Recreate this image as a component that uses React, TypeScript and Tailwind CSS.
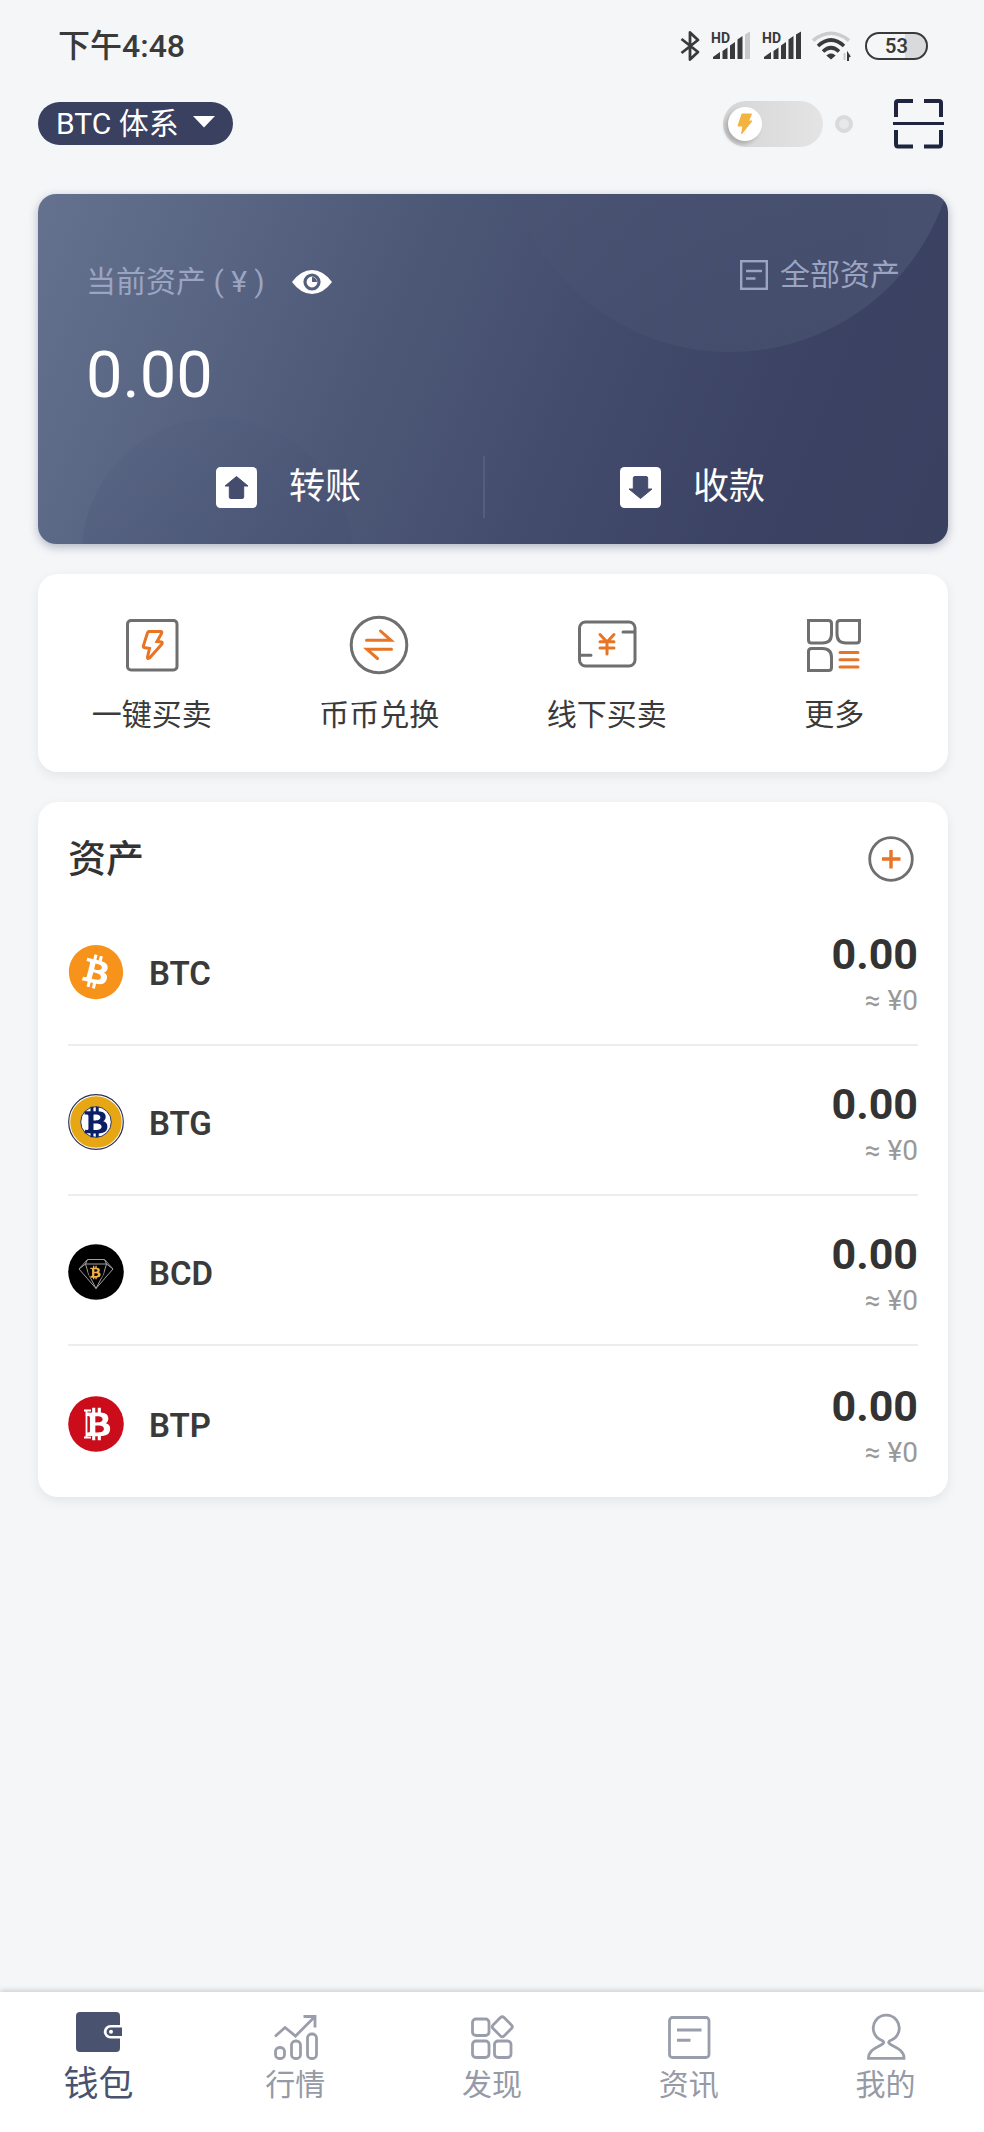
import { useState, type ReactNode } from 'react';
import { FaBitcoin, FaBtc } from 'react-icons/fa';

const ORANGE = '#e87426';
const GRAY = '#6f6f6f';

/* ---------- status bar ---------- */

function BluetoothIcon() {
  return (
    <svg viewBox="0 0 20 32" className="h-8 w-5" fill="none" stroke="#3a3a3a" strokeWidth="2.8" strokeLinejoin="round" aria-hidden="true">
      <path d="M1.5 9 L18 22 L10 29.5 V2.5 L18 10 L1.5 23" />
    </svg>
  );
}

function SignalIcon({ level }: { level: number }) {
  const bars = [
    'M3 28 V26 L10 21 V28Z',
    'M12.5 28 V20 L17.5 16.5 V28Z',
    'M20 28 V14.5 L25 11 V28Z',
    'M27.5 28 V8.5 L32.5 5 V28Z',
    'M35 28 V3.500 L40 0.500 V28Z',
  ];
  return (
    <svg viewBox="0 0 41 30" className="h-[30px] w-[41px]" aria-hidden="true">
      {bars.map((d, i) => (
        <path key={d} d={d} fill={i < level ? '#3a3a3a' : '#c9cacc'} />
      ))}
      <text x="1" y="12" fontSize="14" fontWeight="700" fill="#3a3a3a" fontFamily="Roboto, sans-serif">
        HD
      </text>
    </svg>
  );
}

function WifiIcon() {
  return (
    <svg viewBox="0 0 39 30" className="h-[30px] w-[39px]" fill="none" strokeWidth="3.6" aria-hidden="true">
      <path d="M1 9.5 Q19 -5 37 9.5" stroke="#cbccce" />
      <path d="M6 15 Q19 3 32 15" stroke="#3a3a3a" />
      <path d="M11 20.5 Q19 13 27 20.5" stroke="#3a3a3a" />
      <path d="M15.5 24.5 Q19 22 22.5 24.5 L19 27.5Z" fill="#3a3a3a" stroke="#3a3a3a" strokeWidth="1.5" />
      <path d="M32.5 22 V29" stroke="#cbccce" strokeWidth="2" />
      <path d="M36 30 V23 L38 26" stroke="#3a3a3a" strokeWidth="2" />
    </svg>
  );
}

function StatusBar() {
  return (
    <div className="flex h-[94px] items-center justify-between px-5 pb-0.5 text-[#3a3a3a]">
      <span className="text-[32px] font-medium">下午4:48</span>
      <div className="flex items-center gap-[10px]">
        <BluetoothIcon />
        <SignalIcon level={4} />
        <SignalIcon level={5} />
        <WifiIcon />
        <span className="ml-1 flex h-7 w-[63px] items-center justify-center rounded-full border-2 border-[#3a3a3a] bg-linear-to-r from-white/0 from-65% to-[#d9dadc] to-65% text-xl font-semibold">
          53
        </span>
      </div>
    </div>
  );
}

/* ---------- toolbar ---------- */

function LightningSwitch() {
  const [on, setOn] = useState(false);
  return (
    <label className="flex cursor-pointer items-center gap-3">
      <input
        type="checkbox"
        className="peer sr-only"
        checked={on}
        onChange={(e) => setOn(e.target.checked)}
        aria-label="闪电网络"
      />
      <span className="flex h-[46px] w-[100px] items-center rounded-full bg-linear-to-r from-[#d6d6d6] to-[#e4e4e4] px-[5px] peer-checked:justify-end">
        <span className="flex size-[34px] items-center justify-center rounded-full bg-white shadow-[-3px_3px_4px_rgba(0,0,0,0.2)]">
          <svg viewBox="0 0 16 22" className="h-[22px] w-4" fill="#f4b23f" aria-hidden="true">
            <path d="M5 1 H14.5 L11.5 8 H15 L4.5 21 L6 13 H1Z" stroke="#f4b23f" strokeLinejoin="round" />
          </svg>
        </span>
      </span>
      <span className="size-[18px] rounded-full border-4 border-[#dadada] bg-[#e8e8e8]" />
    </label>
  );
}

function Toolbar() {
  return (
    <div className="flex items-center justify-between">
      <div className="relative">
        <select
          aria-label="体系"
          className="h-[43px] cursor-pointer appearance-none rounded-full bg-[#394060] pr-[54px] pl-[18px] text-[30px] leading-[43px] text-white"
        >
          <option>BTC 体系</option>
        </select>
        <svg viewBox="0 0 22 12" className="pointer-events-none absolute top-[14px] right-[18px] h-3 w-[22px]" fill="white" aria-hidden="true">
          <path d="M0 0 H22 L11 11.5Z" />
        </svg>
      </div>
      <div className="flex items-center gap-9">
        <LightningSwitch />
        <button type="button" aria-label="扫一扫" className="cursor-pointer p-1">
          <svg viewBox="0 0 51 51" className="size-[51px]" fill="none" stroke="#1f2541" strokeWidth="4" strokeLinejoin="round">
            <path d="M3 19 V5 Q3 3 5 3 H20 M31 3 H46 Q48 3 48 5 V19 M48 32 V46 Q48 48.5 46 48.5 H31 M20 48.5 H5 Q3 48.5 3 46 V32" />
            <path d="M0 25.5 H51" strokeWidth="3" />
          </svg>
        </button>
      </div>
    </div>
  );
}

/* ---------- balance card ---------- */

function ArrowBox({ down = false }: { down?: boolean }) {
  return (
    <svg viewBox="0 0 41 41" className={down ? 'size-[41px] rotate-180' : 'size-[41px]'} aria-hidden="true">
      <rect width="41" height="41" rx="4.5" fill="white" />
      <path
        d="M20.5 9.5 L32 19 H27.7 V30 Q27.7 31.5 26.2 31.5 H14.8 Q13.3 31.5 13.3 30 V19 H9Z"
        fill="#444d6e"
        stroke="#444d6e"
        strokeLinejoin="round"
      />
    </svg>
  );
}

function BalanceCard() {
  const [hidden, setHidden] = useState(false);
  return (
    <section className="relative mt-[41px] overflow-hidden rounded-[18px] bg-[linear-gradient(112deg,#64728f_0%,#4d5877_38%,#434b6c_60%,#3b4263_80%,#394060_100%)] px-12 pt-[59px] pb-[26px] shadow-[0_3px_10px_rgba(57,64,96,0.35)]">
      <div className="absolute -top-[296px] right-[-9px] size-[454px] rounded-full bg-linear-to-r from-[#8fa5b4]/0 to-[#8fa5b4]/16" />
      <div className="absolute top-[224px] left-11 size-[270px] rounded-full bg-linear-to-b from-[#39426a]/5 to-[#39426a]/25" />
      <div className="relative">
        <div className="flex items-start justify-between text-[30px] text-[#9ba4c1]">
          <div className="flex items-center gap-[26px]">
            <span className="leading-[58px]">当前资产 ( ¥ )</span>
            <button type="button" aria-label="显示或隐藏资产" onClick={() => setHidden(!hidden)} className="cursor-pointer">
              <svg viewBox="0 0 42 26" className="h-[26px] w-[42px]">
                <path d="M1 13 Q10 1 21 1 Q32 1 41 13 Q32 25 21 25 Q10 25 1 13Z" fill="white" />
                <circle cx="21" cy="13" r="7" fill="white" stroke="#55607f" strokeWidth="3.2" />
                <path d="M21 13 V8 A5 5 0 0 1 26 13Z" fill="#55607f" />
              </svg>
            </button>
          </div>
          <a href="#all" className="flex items-center gap-3 leading-[44px]">
            <svg viewBox="0 0 28 30" className="h-[30px] w-7" fill="none" stroke="#9ba4c1" strokeWidth="2.4" aria-hidden="true">
              <rect x="1.2" y="1.2" width="25.6" height="27.6" />
              <path d="M6 11 H22 M6 18.5 H15.5" />
            </svg>
            全部资产
          </a>
        </div>
        <p className="mt-6 text-[65px] leading-[80px] text-white">{hidden ? '****' : '0.00'}</p>
        <div className="mt-[41px] flex h-[62px] text-4xl text-white">
          <button type="button" className="flex w-[49%] cursor-pointer items-center justify-center gap-8 border-r-2 border-[#535d80] pl-2">
            <ArrowBox />
            转账
          </button>
          <button type="button" className="flex flex-1 cursor-pointer items-center justify-center gap-8">
            <ArrowBox down />
            收款
          </button>
        </div>
      </div>
    </section>
  );
}

/* ---------- quick actions ---------- */

const ACTIONS: { label: string; icon: ReactNode }[] = [
  {
    label: '一键买卖',
    icon: (
      <>
        <rect x="5.5" y="5.5" width="49.5" height="49.5" rx="3.5" />
        <path
          d="M27 16.5 H38.5 Q40.5 16.5 39.5 18.5 L35 26.5 L39.5 27 Q41 27.5 39.5 29.5 L27.5 43 Q25 44.5 25.5 42 L27.5 33.5 L22 32.5 Q21 32 21.5 30.5 L25.5 17.8 Q26 16.5 27 16.5Z"
          stroke={ORANGE}
        />
      </>
    ),
  },
  {
    label: '币币兑换',
    icon: (
      <>
        <circle cx="30" cy="30" r="27.8" />
        <path d="M17.5 25.3 H42 L31.5 16 M42.5 34.3 H18 L28.5 43.5" stroke={ORANGE} />
      </>
    ),
  },
  {
    label: '线下买卖',
    icon: (
      <>
        <rect x="2.5" y="7" width="55.5" height="44" rx="6" />
        <path d="M46 17 H57 M3 40.3 H14" />
        <path d="M23 19.5 L30 27 L37 19.5 M30 27 V39 M23 26.8 H37 M23 33 H37" stroke={ORANGE} />
      </>
    ),
  },
  {
    label: '更多',
    icon: (
      <>
        <path d="M4.5 5.5 H24.5 Q27.5 5.5 27.5 8.5 V19 Q27.5 28 18.5 28 H7.5 Q4.5 28 4.5 25Z" />
        <path d="M55.5 5.5 H36 Q33 5.5 33 8.5 V19 Q33 28 42 28 H52.5 Q55.5 28 55.5 25Z" />
        <path d="M4.5 55.5 V36.5 Q4.5 33.5 7.5 33.5 H18.5 Q27.5 33.5 27.5 42.5 V52.5 Q27.5 55.5 24.5 55.5Z" />
        <path d="M36 37.5 H54 M36 44.8 H54 M36 52 H54" stroke={ORANGE} />
      </>
    ),
  },
];

function QuickActions() {
  return (
    <section className="mt-[30px] grid grid-cols-4 rounded-[20px] bg-white pt-[41px] pb-[37px] shadow-[0_4px_12px_rgba(0,0,0,0.07)]">
      {ACTIONS.map(({ label, icon }) => (
        <button key={label} type="button" className="flex cursor-pointer flex-col items-center gap-5 text-[30px] leading-10 text-[#3a3a3a]">
          <svg viewBox="0 0 60 60" className="size-[60px]" fill="none" stroke={GRAY} strokeWidth="3" strokeLinecap="round" aria-hidden="true">
            {icon}
          </svg>
          {label}
        </button>
      ))}
    </section>
  );
}

/* ---------- asset list ---------- */

const COINS: { name: string; logo: ReactNode }[] = [
  {
    name: 'BTC',
    logo: <FaBitcoin size={56} color="#f7931a" />,
  },
  {
    name: 'BTG',
    logo: (
      <>
        <circle cx="28" cy="28" r="27.3" fill="white" stroke="#2a3157" strokeWidth="1.2" />
        <circle cx="28" cy="28" r="20.5" fill="none" stroke="#e7a614" strokeWidth="10.5" />
        <circle cx="28" cy="28" r="15.3" fill="white" stroke="#2a3157" />
        <FaBtc x={12.5} y={12.5} size={31} color="#0b1f66" />
      </>
    ),
  },
  {
    name: 'BCD',
    logo: (
      <>
        <circle cx="28" cy="28" r="27.8" fill="black" />
        <path
          d="M19.5 15.5 H36.5 L45 25 L28 44.5 L11 25Z M11 25 L17.5 20 L19.5 15.5 M45 25 L38.5 20 L36.5 15.5 M17.5 20 H38.5 M17.5 20 L20.5 30 L28 44.5 L35.5 30 L38.5 20"
          fill="none"
          stroke="#a0a0a0"
        />
        <circle cx="28" cy="28.5" r="7.5" fill="black" />
        <FaBtc x={20.5} y={21.5} size={14} color="#efb04c" />
      </>
    ),
  },
  {
    name: 'BTP',
    logo: (
      <>
        <circle cx="28" cy="28" r="27.8" fill="#cb0c1b" />
        <FaBtc x={13.5} y={11.5} size={33} color="white" />
        <path d="M16 14.5 H23 M16 41.5 H23 M18.5 14.5 V41.5" stroke="white" strokeWidth="1.8" />
      </>
    ),
  },
];

function AssetList() {
  return (
    <section className="mt-[30px] rounded-[20px] bg-white px-[30px] shadow-[0_4px_12px_rgba(0,0,0,0.07)]">
      <div className="flex items-center justify-between pt-[34px] pr-1 pb-[14px] text-[#333]">
        <h2 className="text-[38px] leading-[46px] font-medium">资产</h2>
        <button type="button" aria-label="添加资产" className="cursor-pointer">
          <svg viewBox="0 0 46 46" className="size-[46px]" fill="none" stroke={GRAY} strokeWidth="2.8">
            <circle cx="23" cy="23" r="21.3" />
            <path d="M14 23 H32.5 M23 14 V32.5" stroke={ORANGE} strokeWidth="3.4" />
          </svg>
        </button>
      </div>
      <ul>
        {COINS.map(({ name, logo }) => (
          <li key={name} className="flex h-[150px] items-center border-b-2 border-[#ededee] pt-1 last:h-[151px] last:border-b-0">
            <svg viewBox="0 0 56 56" className="size-14" aria-hidden="true">
              {logo}
            </svg>
            <span className="ml-[25px] flex-1 pt-1 text-[33px] font-semibold text-[#3a3a3a]">{name}</span>
            <span className="flex flex-col items-end">
              <span className="text-[43px] leading-[58px] font-bold text-[#333]">0.00</span>
              <span className="text-[28px] leading-9 text-[#999]">≈ ¥0</span>
            </span>
          </li>
        ))}
      </ul>
    </section>
  );
}

/* ---------- bottom tabs ---------- */

const TABS: { label: string; icon: ReactNode }[] = [
  {
    label: '钱包',
    icon: (
      <>
        <rect x="2" y="0" width="44" height="40" rx="4" fill="#49536f" stroke="none" />
        <path d="M48 13 H36.5 A6.7 6.7 0 0 0 36.5 26.5 H48Z" fill="white" stroke="none" />
        <path d="M48 15.5 H36.8 A4.2 4.2 0 0 0 36.8 24 H48Z" fill="#49536f" stroke="none" />
        <circle cx="37" cy="19.8" r="2" fill="white" stroke="none" />
      </>
    ),
  },
  {
    label: '行情',
    icon: (
      <>
        <path d="M4 24.5 L14 15.5 L24.5 24 L43.5 5 M32.5 4.5 H44 V15.5" />
        <rect x="4.5" y="35.5" width="9" height="11" rx="4" />
        <rect x="20.5" y="29" width="9" height="17.5" rx="4" />
        <rect x="36.5" y="22" width="9" height="24.5" rx="4" />
      </>
    ),
  },
  {
    label: '发现',
    icon: (
      <>
        <rect x="4.5" y="7" width="16.5" height="16.5" rx="3.5" />
        <rect x="4.5" y="29" width="16.5" height="16.5" rx="3.5" />
        <rect x="26.5" y="29" width="16.5" height="16.5" rx="3.5" />
        <rect x="26.5" y="7" width="15.5" height="15.5" rx="2.5" transform="rotate(45 34.25 14.75)" />
      </>
    ),
  },
  {
    label: '资讯',
    icon: (
      <>
        <rect x="4.5" y="5.5" width="39.5" height="40" rx="3" />
        <path d="M12 18 H36.5 M12 28.3 H25.5" strokeWidth="3" />
      </>
    ),
  },
  {
    label: '我的',
    icon: (
      <path d="M21.7 30.5 Q21.7 29 19 28 A13 13 0 1 1 29.5 28 Q26.7 29 26.7 30.5 C28 34.5 42 35.5 42 46.3 H6.5 C6.5 35.5 20.5 34.5 21.7 30.5Z" />
    ),
  },
];

function TabBar() {
  return (
    <nav className="grid h-[140px] grid-cols-5 bg-white pt-5 shadow-[0_-1px_6px_rgba(0,0,0,0.2)]">
      {TABS.map(({ label, icon }, i) => (
        <a key={label} href={`#tab-${i}`} aria-current={i === 0 ? 'page' : undefined} className="flex flex-col items-center">
          <svg viewBox="0 0 48 48" className="size-12" fill="none" stroke="#9a9eab" strokeWidth="2.8" aria-hidden="true">
            {icon}
          </svg>
          <span className={i === 0 ? 'text-[35px] leading-[50px] text-[#49536f]' : 'text-[30px] leading-[50px] text-[#969aa6]'}>
            {label}
          </span>
        </a>
      ))}
    </nav>
  );
}

export default function App() {
  return (
    <div className="flex min-h-screen flex-col bg-[#f4f6f8] font-[Roboto,'Noto_Sans_CJK_SC',sans-serif]">
      <main className="flex-1 pr-9 pb-8 pl-[38px]">
        <StatusBar />
        <Toolbar />
        <BalanceCard />
        <QuickActions />
        <AssetList />
      </main>
      <TabBar />
    </div>
  );
}
